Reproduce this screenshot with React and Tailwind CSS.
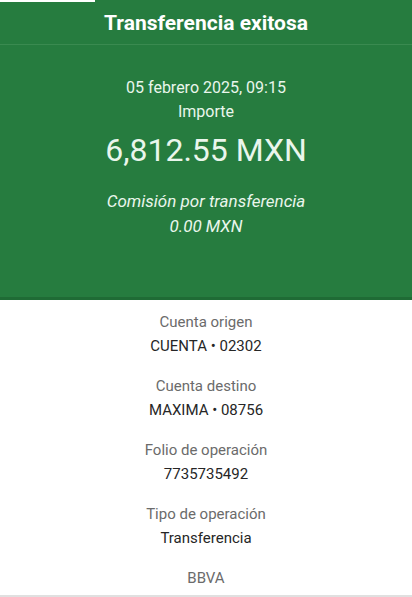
export default function App() {
  const rows = [
    ["Cuenta origen", "CUENTA • 02302"],
    ["Cuenta destino", "MAXIMA • 08756"],
    ["Folio de operación", "7735735492"],
    ["Tipo de operación", "Transferencia"],
  ];
  return (
    <div className="relative w-[412px] h-[597px] overflow-hidden bg-white font-['Roboto',sans-serif]">
      <div className="bg-[#267c3f] border-b-[3px] border-[#1f6b35] h-[300px] flex flex-col items-center">
        <div className="w-full h-[45px] flex items-center justify-center border-b border-[#3a8a50]">
          <span className="text-[21px] font-bold text-white leading-[26px] mt-[1px]">Transferencia exitosa</span>
        </div>
        <div className="mt-[31px] flex flex-col items-center text-[#eaf6ec]">
          <div className="text-[16px] leading-[24px]">05 febrero 2025, 09:15</div>
          <div className="text-[16px] leading-[24px]">Importe</div>
          <div className="text-[32px] leading-[40px] mt-[6px]">6,812.55 MXN</div>
          <div className="text-[17px] italic leading-[24px] mt-[19px]">Comisión por transferencia</div>
          <div className="text-[17px] italic leading-[24px] mt-[1px]">0.00 MXN</div>
        </div>
      </div>
      <div className="absolute left-0 top-0 h-[2px] w-[95px] bg-white" />
      <div className="pt-[10px] flex flex-col items-center gap-[16px]">
        {rows.map(([l, v]) => (
          <div key={l} className="flex flex-col items-center">
            <div className="text-[15px] leading-[24px] text-[#6b6b6b]">{l}</div>
            <div className="text-[15px] leading-[24px] text-[#262626]">{v}</div>
          </div>
        ))}
        <div className="text-[15px] leading-[24px] text-[#6b6b6b]">BBVA</div>
      </div>
      <div className="absolute left-0 bottom-0 w-full h-[2px] bg-[#e0e0e0]" />
    </div>
  );
}
